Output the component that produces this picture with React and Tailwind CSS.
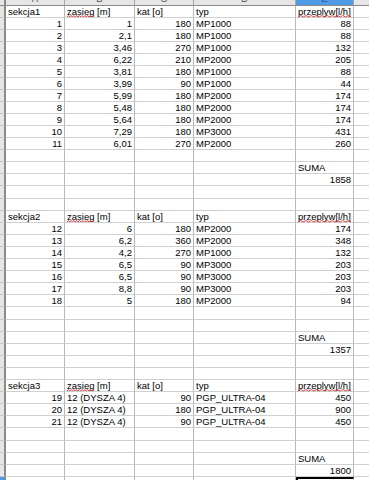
import React from "react";

const COLS = ["w-[6px]", "w-[59px]", "w-[70px]", "w-[59px]", "w-[102px]", "w-[58px]", "flex-1"];

const rows = [
  ["h1", "sekcja1"],
  ["d", "1", "1", "180", "MP1000", "88"],
  ["d", "2", "2,1", "180", "MP1000", "88"],
  ["d", "3", "3,46", "270", "MP1000", "132"],
  ["d", "4", "6,22", "210", "MP2000", "205"],
  ["d", "5", "3,81", "180", "MP1000", "88"],
  ["d", "6", "3,99", "90", "MP1000", "44"],
  ["d", "7", "5,99", "180", "MP2000", "174"],
  ["d", "8", "5,48", "180", "MP2000", "174"],
  ["d", "9", "5,64", "180", "MP2000", "174"],
  ["d", "10", "7,29", "180", "MP3000", "431"],
  ["d", "11", "6,01", "270", "MP2000", "260"],
  ["e"],
  ["suma"],
  ["sum", "1858"],
  ["e", "tall"],
  ["e"],
  ["h1", "sekcja2"],
  ["d", "12", "6", "180", "MP2000", "174"],
  ["d", "13", "6,2", "360", "MP2000", "348"],
  ["d", "14", "4,2", "270", "MP1000", "132"],
  ["d", "15", "6,5", "90", "MP3000", "203"],
  ["d", "16", "6,5", "90", "MP3000", "203"],
  ["d", "17", "8,8", "90", "MP3000", "203"],
  ["d", "18", "5", "180", "MP2000", "94"],
  ["e", "tall"],
  ["e"],
  ["suma"],
  ["sum", "1357"],
  ["e"],
  ["e"],
  ["h1", "sekcja3"],
  ["dl", "19", "12 (DYSZA 4)", "90", "PGP_ULTRA-04", "450"],
  ["dl", "20", "12 (DYSZA 4)", "180", "PGP_ULTRA-04", "900"],
  ["dl", "21", "12 (DYSZA 4)", "90", "PGP_ULTRA-04", "450"],
  ["e", "tall"],
  ["e"],
  ["suma"],
  ["sum", "1800"],
  ["sel"],
];

function Cell({ w, children, right, last, clip = true, className = "" }) {
  return (
    <div
      className={`${w} shrink-0 h-full border-b border-[#d0d0d0] ${last ? "" : "border-r border-r-[#b8b8b8]"} ${clip ? "overflow-hidden" : "overflow-visible"} whitespace-nowrap px-[2px] leading-[11px] ${right ? "text-right" : "text-left"} ${className}`}
    >
      {children}
    </div>
  );
}

function Wavy({ children }) {
  return (
    <span className="relative inline-block">
      {children}
      <svg
        className="absolute left-0 top-[9px] w-full h-[3px]"
        preserveAspectRatio="none"
        viewBox="0 0 40 3"
        aria-hidden="true"
      >
        <polyline
          points="0,2 2,0.5 4,2 6,0.5 8,2 10,0.5 12,2 14,0.5 16,2 18,0.5 20,2 22,0.5 24,2 26,0.5 28,2 30,0.5 32,2 34,0.5 36,2 38,0.5 40,2"
          fill="none"
          stroke="#e03030"
          strokeWidth="0.9"
          vectorEffect="non-scaling-stroke"
        />
      </svg>
    </span>
  );
}

function Row({ r }) {
  const type = r[0];
  let cells = ["", "", "", "", "", ""];
  let align = [false, false, false, false, false, false];
  if (type === "h1") {
    cells = [r[1], <><Wavy>zasieg</Wavy> [m]</>, "kat [o]", "typ", <Wavy>przeplyw[l/h]</Wavy>, ""];
  } else if (type === "d") {
    cells = [r[1], r[2], r[3], r[4], r[5], ""];
    align = [true, true, true, false, true, false];
  } else if (type === "dl") {
    cells = [r[1], r[2], r[3], r[4], r[5], ""];
    align = [true, false, true, false, true, false];
  } else if (type === "suma") {
    cells = ["", "", "", "", "SUMA", ""];
  } else if (type === "sum") {
    cells = ["", "", "", "", r[1], ""];
    align = [false, false, false, false, true, false];
  }
  const sel = type === "sel";
  const tall = r[1] === "tall";
  return (
    <div className={`flex ${tall ? "h-[13px]" : "h-[12px]"}`}>
      <div className={`w-[6px] shrink-0 h-full border-b border-b-[#c4c4c4] border-r-2 border-r-[#8a8a8a] ${sel ? "bg-[#4f9be8]" : "bg-[#e6e6e6]"}`} />
      {cells.map((c, i) => (
        <Cell
          key={i}
          w={COLS[i + 1]}
          right={align[i]}
          last={i === 5}
          clip={type !== "h1"}
          className={sel && i === 4 ? "border-2 border-black" : ""}
        >
          {c}
        </Cell>
      ))}
    </div>
  );
}

export default function App() {
  const letters = ["A", "B", "C", "D", "E", "F"];
  return (
    <div
      className="w-[369px] h-[480px] overflow-hidden bg-white text-black text-[9.5px]"
      style={{ fontFamily: '"Liberation Sans", Arial, sans-serif' }}
    >
      <div className="flex h-[6px]">
        <div className="w-[6px] shrink-0 h-full bg-[#e6e6e6] border-b border-b-[#8a8a8a] border-r-2 border-r-[#8a8a8a]" />
        {letters.map((l, i) => (
          <div
            key={l}
            className={`${COLS[i + 1]} shrink-0 h-full flex items-end justify-center overflow-hidden border-b border-b-[#8a8a8a] ${i === 5 ? "" : "border-r border-r-[#a8a8a8]"} ${i === 4 ? "bg-[#4f9be8] text-[#2a5a9a]" : "bg-[#e6e6e6] text-[#555]"}`}
          >
            <span className="leading-[12px]">{i === 5 ? "" : l}</span>
          </div>
        ))}
      </div>
      {rows.map((r, i) => (
        <Row key={i} r={r} />
      ))}
    </div>
  );
}
